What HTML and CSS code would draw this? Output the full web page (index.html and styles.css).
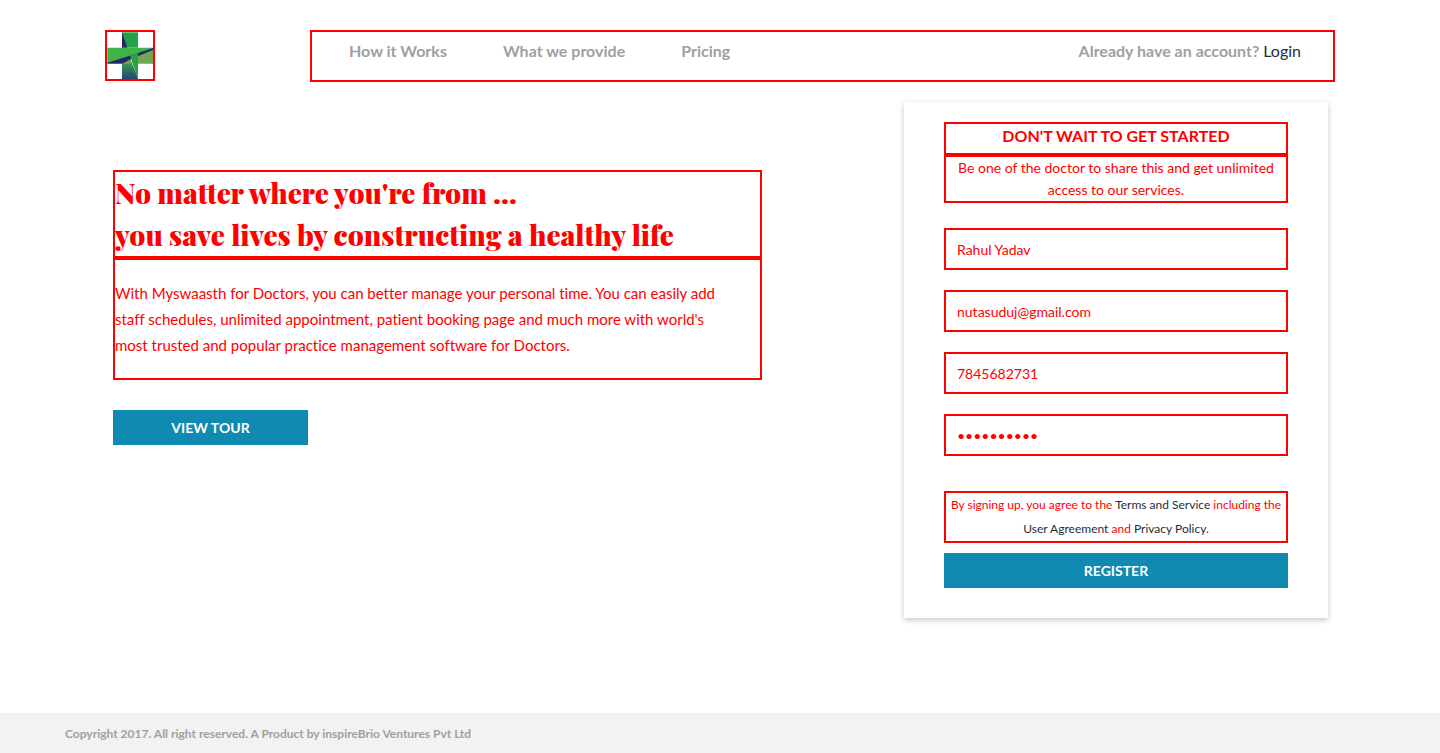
FILE: index.html
```html
<!DOCTYPE html>
<html lang="en">
<head>
<meta charset="utf-8">
<meta name="viewport" content="width=device-width, initial-scale=1">
<title>Myswaasth for Doctors</title>
<link rel="stylesheet" href="styles.css">
</head>
<body>
<header class="header">
  <a class="logo outlined" href="#" aria-label="Home">
    <svg class="logo-mark" viewBox="36 36 138 141" aria-hidden="true">
      <defs>
        <linearGradient id="stem" x1="0" y1="0" x2="0" y2="1">
          <stop offset="0" stop-color="#3fae49"/>
          <stop offset="1" stop-color="#26466f"/>
        </linearGradient>
      </defs>
      <path fill="#27a148" d="M81 37h48v46H81z"/>
      <path fill="#25266c" d="M81 37l16 46H81z"/>
      <path fill="url(#stem)" d="M81 131l25-14 19 47 4 13H81z"/>
      <path fill="#6fa850" d="M127 103l47-16v44h-45z"/>
      <path fill="#6fa850" d="M82 131l25-14v14z"/>
      <path fill="#25266c" d="M37 126l137-43v7L108 117 82 131H37z"/>
      <path fill="#27a148" d="M105 107l24-8v78z"/>
      <path fill="#3eb549" d="M37 83h137L104 107 37 128z"/>
    </svg>
  </a>
  <nav class="nav outlined" aria-label="Main">
    <a class="nav-link" href="#">How it Works</a>
    <a class="nav-link" href="#">What we provide</a>
    <a class="nav-link" href="#">Pricing</a>
    <span class="account">Already have an account? <a class="dark-link" href="#">Login</a></span>
  </nav>
</header>
<main class="main">
  <section class="intro">
    <h1 class="headline outlined">No matter where you're from ...<br>you save lives by constructing a healthy life</h1>
    <p class="lead outlined">With Myswaasth for Doctors, you can better manage your personal time. You can easily add staff schedules, unlimited appointment, patient booking page and much more with world's most trusted and popular practice management software for Doctors.</p>
    <button class="button tour" type="button">VIEW TOUR</button>
  </section>
  <form class="card">
    <h2 class="card-title outlined">DON'T WAIT TO GET STARTED</h2>
    <p class="card-text outlined">Be one of the doctor to share this and get unlimited access to our services.</p>
    <div class="fields">
      <input class="field outlined" type="text" aria-label="Name" value="Rahul Yadav">
      <input class="field outlined" type="email" aria-label="Email" value="nutasuduj@gmail.com">
      <input class="field outlined" type="tel" aria-label="Phone" value="7845682731">
      <input class="field outlined" type="password" aria-label="Password" value="abcdefghij">
    </div>
    <p class="terms outlined">By signing up, you agree to the <a class="dark-link" href="#">Terms and Service</a> including the <a class="dark-link" href="#">User Agreement</a> and <a class="dark-link" href="#">Privacy Policy.</a></p>
    <button class="button" type="submit">REGISTER</button>
  </form>
</main>
<footer class="footer">Copyright 2017. All right reserved. A Product by inspireBrio Ventures Pvt Ltd</footer>
</body>
</html>
```
FILE: styles.css
```css
* {
  box-sizing: border-box;
}

body {
  display: flex;
  flex-direction: column;
  min-height: 100vh;
  margin: 0;
  background: #fff;
  color: #f00;
  font-family: Lato, "Liberation Sans", sans-serif;
  font-size: 14px;
}

h1,
h2,
p {
  margin: 0;
}

a {
  color: inherit;
  text-decoration: none;
}

.outlined {
  border: 2px solid #f00;
}

.header {
  display: flex;
  align-items: flex-start;
  justify-content: space-between;
  gap: 155px;
  padding: 30px 105px 20px;
}

.logo {
  flex: none;
  width: 50px;
}

.logo-mark {
  display: block;
  width: 100%;
}

.nav {
  display: flex;
  flex: 1;
  gap: 56px;
  padding: 7px 32px 17px 37px;
  color: #a0a0a0;
  font-size: 16px;
  font-weight: 700;
  line-height: 24px;
}

.account {
  margin-left: auto;
}

.dark-link {
  color: #262b3b;
  font-weight: 400;
}

.main {
  display: grid;
  grid-template-columns: 649fr 424fr;
  gap: 142px;
  align-items: start;
  padding: 0 112px 40px 113px;
}

.intro {
  padding-top: 68px;
}

.headline {
  font-family: "Playfair Display", "Liberation Serif", serif;
  font-size: 28px;
  font-weight: 900;
  line-height: 42px;
}

.lead {
  padding: 20px 24px 20px 0;
  font-size: 15px;
  font-variant-ligatures: none;
  line-height: 26px;
}

.button {
  width: 100%;
  height: 35px;
  border: 0;
  background: #118ab2;
  color: #fff;
  font: 700 14px/20px Lato, "Liberation Sans", sans-serif;
}

.tour {
  width: 195px;
  margin-top: 30px;
}

.card {
  padding: 20px 40px 30px;
  background: #fff;
  box-shadow: 0 2px 6px rgba(0, 0, 0, 0.22);
  text-align: center;
}

.card-title {
  padding-bottom: 5px;
  font-size: 16px;
  line-height: 24px;
}

.card-text {
  padding: 0 8px;
  line-height: 22px;
}

.fields {
  display: grid;
  gap: 20px;
  padding: 25px 0 35px;
}

.field {
  width: 100%;
  height: 42px;
  padding: 0 11px;
  border-radius: 0;
  background: #fff;
  color: #f00;
  font: 400 14px/20px Lato, "Liberation Sans", sans-serif;
}

.terms {
  margin-bottom: 10px;
  font-size: 12px;
  line-height: 24px;
}

.footer {
  margin-top: auto;
  padding: 11px 65px 9px;
  background: #f2f2f2;
  color: #a0a0a0;
  font-size: 12px;
  font-weight: 700;
  line-height: 20px;
}
```
